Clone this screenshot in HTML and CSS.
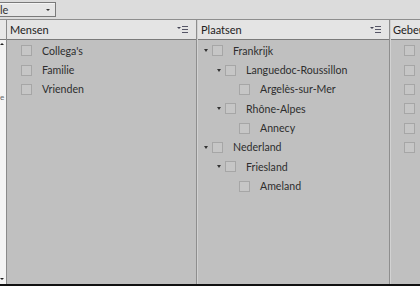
FILE: index.html
```html
<!DOCTYPE html>
<html>
<head>
<meta charset="utf-8">
<link rel="stylesheet" href="styles.css">
</head>
<body>
<div class="topbar">
  <div class="select"><span class="select-text">le</span><span class="select-arrow"></span></div>
</div>
<div class="main">
  <div class="strip">
    <div class="strip-head"></div>
    <div class="strip-body">
      <span class="arrow-up"></span>
      <span class="strip-e">e</span>
      <span class="arrow-down"></span>
    </div>
  </div>
  <div class="col col-1">
    <div class="col-head"><span class="title">Mensen</span><span class="sort"><span class="tri"></span><span class="lines"><i></i><i></i><i></i></span></span></div>
    <div class="col-body">
      <div class="row l0 leaf"><span class="box"></span><span class="label">Collega's</span></div>
      <div class="row l0 leaf"><span class="box"></span><span class="label">Familie</span></div>
      <div class="row l0 leaf"><span class="box"></span><span class="label">Vrienden</span></div>
    </div>
  </div>
  <div class="col col-2">
    <div class="col-head"><span class="title">Plaatsen</span><span class="sort"><span class="tri"></span><span class="lines"><i></i><i></i><i></i></span></span></div>
    <div class="col-body tree">
      <div class="row t0"><span class="exp"></span><span class="box"></span><span class="label">Frankrijk</span></div>
      <div class="row t1"><span class="exp"></span><span class="box"></span><span class="label">Languedoc-Roussillon</span></div>
      <div class="row t2"><span class="box"></span><span class="label">Argelès-sur-Mer</span></div>
      <div class="row t1"><span class="exp"></span><span class="box"></span><span class="label">Rhône-Alpes</span></div>
      <div class="row t2"><span class="box"></span><span class="label">Annecy</span></div>
      <div class="row t0"><span class="exp"></span><span class="box"></span><span class="label">Nederland</span></div>
      <div class="row t1"><span class="exp"></span><span class="box"></span><span class="label">Friesland</span></div>
      <div class="row t2"><span class="box"></span><span class="label">Ameland</span></div>
    </div>
  </div>
  <div class="col col-3">
    <div class="col-head"><span class="title">Gebeurtenissen</span></div>
    <div class="col-body">
      <div class="row g"><span class="box"></span></div>
      <div class="row g"><span class="box"></span></div>
      <div class="row g"><span class="box"></span></div>
      <div class="row g"><span class="box"></span></div>
      <div class="row g"><span class="box"></span></div>
      <div class="row g"><span class="box"></span></div>
    </div>
  </div>
</div>
<div class="bottom"></div>
</body>
</html>
```
FILE: styles.css
```css
html, body {
  margin: 0;
  padding: 0;
}
body {
  width: 420px;
  height: 286px;
  overflow: hidden;
  background: #c0c0c0;
  font-family: Lato, "Liberation Sans", sans-serif;
  font-size: 10.6px;
  color: #2e2e2e;
  display: flex;
  flex-direction: column;
}
.topbar {
  height: 19px;
  background: #dcdcdc;
  border-bottom: 1px solid #8e8e8e;
  position: relative;
  flex: none;
}
.select {
  position: absolute;
  left: -2px;
  top: 2px;
  width: 56px;
  height: 13px;
  border: 1px solid #7a7a7a;
  background: #e6e6e6;
  box-shadow: inset 1px 1px 0 #f4f4f4;
}
.select-text {
  position: absolute;
  left: 1px;
  top: 0;
  line-height: 13px;
  font-size: 11px;
  color: #333;
}
.select-arrow {
  position: absolute;
  left: 47px;
  top: 6px;
  border-left: 2px solid transparent;
  border-right: 2px solid transparent;
  border-top: 2px solid #333;
}
.main {
  flex: 1;
  display: flex;
  min-height: 0;
}
.strip {
  width: 6px;
  flex: none;
  border-right: 1px solid #8a8a8a;
  display: flex;
  flex-direction: column;
}
.strip-head {
  height: 19px;
  background: #e8e8e8;
  border-bottom: 1px solid #7a7a7a;
}
.strip-body {
  flex: 1;
  background: #f4f4f4;
  position: relative;
  overflow: hidden;
}
.arrow-up {
  position: absolute;
  left: 0;
  top: 3px;
  border-left: 2px solid transparent;
  border-right: 2px solid transparent;
  border-bottom: 2px solid #222;
}
.arrow-down {
  position: absolute;
  left: 0;
  bottom: 4px;
  border-left: 2px solid transparent;
  border-right: 2px solid transparent;
  border-top: 2px solid #222;
}
.strip-e {
  position: absolute;
  left: 0;
  top: 52px;
  font-size: 8px;
  color: #666;
}
.col {
  display: flex;
  flex-direction: column;
  flex: none;
  overflow: hidden;
}
.col-1 { width: 189px; border-right: 1px solid #8e8e8e; }
.col-2 { width: 191px; border-left: 1px solid #d2d2d2; border-right: 1px solid #8e8e8e; }
.col-3 { flex: 1 1 0; min-width: 0; border-left: 1px solid #d2d2d2; }
.col-head {
  height: 19px;
  background: #e4e4e4;
  border-bottom: 1px solid #7a7a7a;
  display: flex;
  align-items: center;
  padding-left: 3px;
  padding-right: 8px;
  white-space: nowrap;
  overflow: hidden;
  font-size: 11px;
  color: #222;
}
.col-3 .col-head { padding-left: 2px; padding-right: 0; }
.title { flex: 1; }
.sort {
  display: flex;
  align-items: center;
  gap: 1px;
}
.tri {
  border-left: 2px solid transparent;
  border-right: 2px solid transparent;
  border-top: 2px solid #445;
  margin-top: -3px;
}
.lines {
  display: flex;
  flex-direction: column;
  gap: 2px;
}
.lines i {
  display: block;
  width: 6px;
  height: 1px;
  background: #556;
}
.col-body {
  flex: 1;
  padding-top: 1px;
}
.row {
  height: 19.35px;
  display: flex;
  align-items: center;
  white-space: nowrap;
}
.box {
  width: 9px;
  height: 9px;
  border: 1px solid #a6a6a6;
  background: #c6c6c6;
  flex: none;
}
.label {
  color: #2e2e2e;
}
.leaf { padding-left: 14px; }
.leaf .label { margin-left: 10px; }
.exp {
  width: 0;
  height: 0;
  border-left: 2px solid transparent;
  border-right: 2px solid transparent;
  border-top: 3px solid #333;
  margin-right: 4px;
  flex: none;
}
.tree .label { margin-left: 10px; }
.t0 { padding-left: 6px; }
.t1 { padding-left: 19px; }
.t2 { padding-left: 41px; }
.g { padding-left: 13px; }
.bottom {
  height: 2px;
  background: #111;
  flex: none;
}
```
